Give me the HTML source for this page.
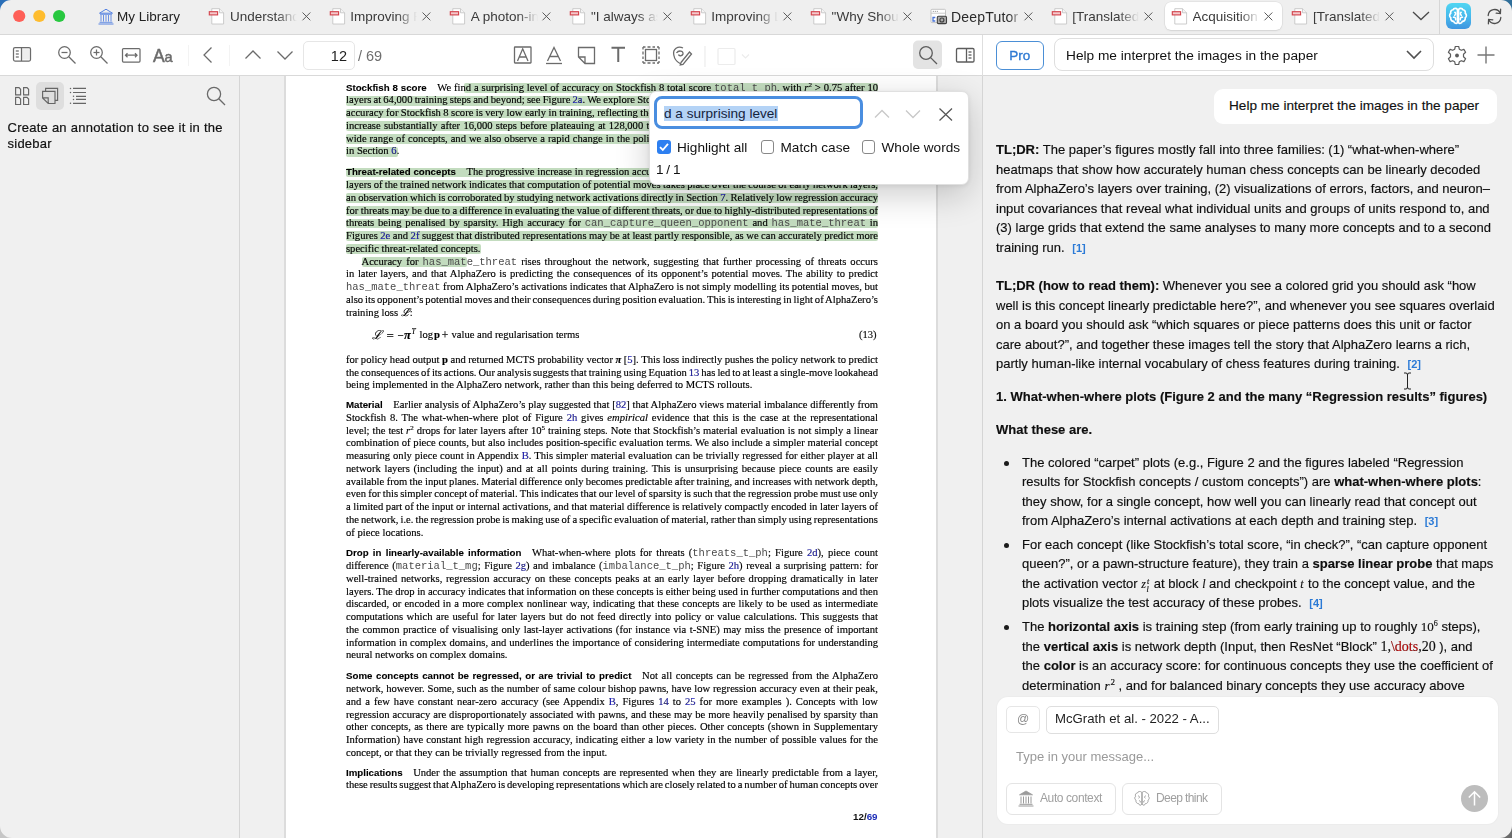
<!DOCTYPE html>
<html><head><meta charset="utf-8">
<style>
*{box-sizing:border-box;margin:0;padding:0}
html,body{width:1512px;height:838px;overflow:hidden;background:#efefef;font-family:"Liberation Sans",sans-serif;color:#1d1d1d}
.abs{position:absolute}
#tabbar{position:absolute;left:0;top:0;width:1512px;height:35px;background:#efefef;border-bottom:1px solid #d8d8d8}
#toolbar{position:absolute;left:0;top:35px;width:1512px;height:41px;background:#fff;border-bottom:1px solid #d9d9d9}
#sidebar{position:absolute;left:0;top:76px;width:240px;height:762px;background:#f0f0f0;border-right:1px solid #d5d5d5}
#pdfview{position:absolute;left:240px;top:76px;width:743px;height:762px;background:#f0f0f0;overflow:hidden}
#page{position:absolute;left:284px;top:76px;width:654px;height:762px;background:#fff;border-left:2px solid #dcdcdc;border-right:2px solid #dcdcdc}
#panel{position:absolute;left:982px;top:76px;width:530px;height:762px;background:#f0f0f0;border-left:1px solid #d5d5d5;overflow:hidden}
.tab{position:absolute;top:0;height:34px;font-size:13px;color:#3c3c3c}
.tabtxt{position:absolute;top:9px;white-space:nowrap;overflow:hidden;width:67px;-webkit-mask-image:linear-gradient(90deg,#000 75%,transparent 100%)}
.tabx{position:absolute;top:12px;width:9px;height:9px}
.ln{position:absolute;left:346px;height:12.75px;line-height:12.75px;font-family:"Liberation Serif",serif;font-size:10.6px;color:#000;white-space:nowrap;text-align:left;-webkit-text-stroke:0.15px #000}
.ln.last{}
.ln sup{font-size:7px;vertical-align:0;position:relative;top:-4px;line-height:0}
.mono{font-family:"Liberation Mono",monospace;font-size:10.5px;color:#4a4a4a;-webkit-text-stroke:0}
.lnk{color:#2323c8}
.hd{font-family:"Liberation Sans",sans-serif;font-weight:bold;font-size:9.7px;letter-spacing:0;color:#000;-webkit-text-stroke:0.1px #000}
.hl{position:absolute;height:9.9px;background:#c3dcbf;border-radius:2px;mix-blend-mode:multiply}
.chat{position:absolute;left:996px;font-size:13px;line-height:19.5px;height:19.5px;white-space:nowrap;color:#0e0e0e;-webkit-text-stroke:0.15px #0e0e0e}
.chat b{font-weight:bold}
.cite{color:#2b7ad6;font-weight:bold;font-size:11px;margin-left:4px;-webkit-text-stroke:0}
.bul{position:absolute;left:1004.3px;width:5px;height:5px;border-radius:50%;background:#1b1b1b}
svg{position:absolute;overflow:visible}
</style></head><body>

<!-- ================= TAB BAR ================= -->
<div id="tabbar"></div>
<svg style="left:0;top:0" width="14" height="14"><path d="M0 0 H11 A11 11 0 0 0 0 11 Z" fill="#2a6fb8"/></svg>
<svg style="left:1498px;top:0" width="14" height="14"><path d="M14 0 H3 A11 11 0 0 1 14 11 Z" fill="#2f6f9a"/></svg>
<svg style="left:0;top:0" width="80" height="34">
  <circle cx="19.2" cy="16" r="6.1" fill="#fe5f57"/>
  <circle cx="39.3" cy="16" r="6.1" fill="#febc2e"/>
  <circle cx="59.1" cy="16" r="6.1" fill="#28c840"/>
</svg>
<!-- My Library -->
<svg style="left:98px;top:8px" width="16" height="17" viewBox="0 0 16 17">
  <path d="M1.5 5.2 L8 1.2 L14.5 5.2 Z" fill="none" stroke="#4677e0" stroke-width="0.9" stroke-linejoin="round"/>
  <line x1="2" y1="6.3" x2="14" y2="6.3" stroke="#4677e0" stroke-width="0.8"/>
  <g stroke="#4677e0" stroke-width="0.8"><line x1="3" y1="7" x2="3" y2="13.5"/><line x1="5.5" y1="7" x2="5.5" y2="13.5"/><line x1="8" y1="7" x2="8" y2="13.5"/><line x1="10.5" y1="7" x2="10.5" y2="13.5"/><line x1="13" y1="7" x2="13" y2="13.5"/></g>
  <line x1="1.5" y1="14.3" x2="14.5" y2="14.3" stroke="#4677e0" stroke-width="0.8"/>
  <line x1="0.5" y1="16" x2="15.5" y2="16" stroke="#4677e0" stroke-width="0.9"/>
</svg>
<div class="abs" style="left:117px;top:9px;font-size:13.5px;color:#222;white-space:nowrap">My Library</div>

<svg style="left:209.3px;top:7.5px" width="18" height="17" viewBox="0 0 18 17"><path d="M2.8 0.7 H10.5 L14.6 4.8 V16 H2.8 Z" fill="#fff" stroke="#c6c6c6" stroke-width="0.9"/><path d="M10.5 0.7 V4.8 H14.6" fill="#f4f4f4" stroke="#c6c6c6" stroke-width="0.9"/><rect x="0.3" y="3.7" width="8.3" height="3.2" fill="#f4c9cb" stroke="#d3414a" stroke-width="1.1"/></svg>
<div class="abs" style="left:230.0px;top:9px;font-size:13.5px;color:#3a3a3a;white-space:nowrap;width:67px;overflow:hidden;-webkit-mask-image:linear-gradient(90deg,#000 70%,transparent 100%)">Understanding</div>
<svg style="left:301.5px;top:12px" width="9" height="9"><path d="M0.5 0.5 L8.3 8.3 M8.3 0.5 L0.5 8.3" stroke="#5a5a5a" stroke-width="1"/></svg>
<svg style="left:329.6px;top:7.5px" width="18" height="17" viewBox="0 0 18 17"><path d="M2.8 0.7 H10.5 L14.6 4.8 V16 H2.8 Z" fill="#fff" stroke="#c6c6c6" stroke-width="0.9"/><path d="M10.5 0.7 V4.8 H14.6" fill="#f4f4f4" stroke="#c6c6c6" stroke-width="0.9"/><rect x="0.3" y="3.7" width="8.3" height="3.2" fill="#f4c9cb" stroke="#d3414a" stroke-width="1.1"/></svg>
<div class="abs" style="left:350.3px;top:9px;font-size:13.5px;color:#3a3a3a;white-space:nowrap;width:67px;overflow:hidden;-webkit-mask-image:linear-gradient(90deg,#000 70%,transparent 100%)">Improving Reasoning</div>
<svg style="left:421.8px;top:12px" width="9" height="9"><path d="M0.5 0.5 L8.3 8.3 M8.3 0.5 L0.5 8.3" stroke="#5a5a5a" stroke-width="1"/></svg>
<svg style="left:450.0px;top:7.5px" width="18" height="17" viewBox="0 0 18 17"><path d="M2.8 0.7 H10.5 L14.6 4.8 V16 H2.8 Z" fill="#fff" stroke="#c6c6c6" stroke-width="0.9"/><path d="M10.5 0.7 V4.8 H14.6" fill="#f4f4f4" stroke="#c6c6c6" stroke-width="0.9"/><rect x="0.3" y="3.7" width="8.3" height="3.2" fill="#f4c9cb" stroke="#d3414a" stroke-width="1.1"/></svg>
<div class="abs" style="left:470.7px;top:9px;font-size:13.5px;color:#3a3a3a;white-space:nowrap;width:67px;overflow:hidden;-webkit-mask-image:linear-gradient(90deg,#000 70%,transparent 100%)">A photon-interaction</div>
<svg style="left:542.2px;top:12px" width="9" height="9"><path d="M0.5 0.5 L8.3 8.3 M8.3 0.5 L0.5 8.3" stroke="#5a5a5a" stroke-width="1"/></svg>
<svg style="left:570.3px;top:7.5px" width="18" height="17" viewBox="0 0 18 17"><path d="M2.8 0.7 H10.5 L14.6 4.8 V16 H2.8 Z" fill="#fff" stroke="#c6c6c6" stroke-width="0.9"/><path d="M10.5 0.7 V4.8 H14.6" fill="#f4f4f4" stroke="#c6c6c6" stroke-width="0.9"/><rect x="0.3" y="3.7" width="8.3" height="3.2" fill="#f4c9cb" stroke="#d3414a" stroke-width="1.1"/></svg>
<div class="abs" style="left:591.0px;top:9px;font-size:13.5px;color:#3a3a3a;white-space:nowrap;width:67px;overflow:hidden;-webkit-mask-image:linear-gradient(90deg,#000 70%,transparent 100%)">"I always assumed</div>
<svg style="left:662.5px;top:12px" width="9" height="9"><path d="M0.5 0.5 L8.3 8.3 M8.3 0.5 L0.5 8.3" stroke="#5a5a5a" stroke-width="1"/></svg>
<svg style="left:690.6px;top:7.5px" width="18" height="17" viewBox="0 0 18 17"><path d="M2.8 0.7 H10.5 L14.6 4.8 V16 H2.8 Z" fill="#fff" stroke="#c6c6c6" stroke-width="0.9"/><path d="M10.5 0.7 V4.8 H14.6" fill="#f4f4f4" stroke="#c6c6c6" stroke-width="0.9"/><rect x="0.3" y="3.7" width="8.3" height="3.2" fill="#f4c9cb" stroke="#d3414a" stroke-width="1.1"/></svg>
<div class="abs" style="left:711.3px;top:9px;font-size:13.5px;color:#3a3a3a;white-space:nowrap;width:67px;overflow:hidden;-webkit-mask-image:linear-gradient(90deg,#000 70%,transparent 100%)">Improving Language</div>
<svg style="left:782.8px;top:12px" width="9" height="9"><path d="M0.5 0.5 L8.3 8.3 M8.3 0.5 L0.5 8.3" stroke="#5a5a5a" stroke-width="1"/></svg>
<svg style="left:810.9px;top:7.5px" width="18" height="17" viewBox="0 0 18 17"><path d="M2.8 0.7 H10.5 L14.6 4.8 V16 H2.8 Z" fill="#fff" stroke="#c6c6c6" stroke-width="0.9"/><path d="M10.5 0.7 V4.8 H14.6" fill="#f4f4f4" stroke="#c6c6c6" stroke-width="0.9"/><rect x="0.3" y="3.7" width="8.3" height="3.2" fill="#f4c9cb" stroke="#d3414a" stroke-width="1.1"/></svg>
<div class="abs" style="left:831.6px;top:9px;font-size:13.5px;color:#3a3a3a;white-space:nowrap;width:67px;overflow:hidden;-webkit-mask-image:linear-gradient(90deg,#000 70%,transparent 100%)">"Why Should I</div>
<svg style="left:903.1px;top:12px" width="9" height="9"><path d="M0.5 0.5 L8.3 8.3 M8.3 0.5 L0.5 8.3" stroke="#5a5a5a" stroke-width="1"/></svg>
<svg style="left:929.3px;top:8px" width="19" height="17" viewBox="0 0 19 17"><rect x="2" y="1.3" width="14.5" height="13.3" rx="1" fill="#fff" stroke="#bdbdbd" stroke-width="0.9"/><line x1="2" y1="5.2" x2="16.5" y2="5.2" stroke="#c4c4c4" stroke-width="0.9"/><circle cx="4.3" cy="3.3" r="0.55" fill="#777"/><circle cx="6.3" cy="3.3" r="0.55" fill="#777"/><circle cx="8.3" cy="3.3" r="0.55" fill="#777"/><path d="M6.3 9.5 H4 V13 H6.3" fill="none" stroke="#4a74d8" stroke-width="1.3"/><rect x="8.3" y="8.3" width="9.2" height="7.3" rx="1.2" fill="#ababab" stroke="#3f3f3f" stroke-width="1.1"/><circle cx="12.9" cy="12" r="2" fill="none" stroke="#3f3f3f" stroke-width="1.1"/></svg>
<div class="abs" style="left:951.0px;top:8.5px;font-size:14px;letter-spacing:0.2px;color:#2a2a2a;white-space:nowrap;width:72px;overflow:hidden;-webkit-mask-image:linear-gradient(90deg,#000 80%,transparent 100%)">DeepTutor</div>
<svg style="left:1023.5px;top:12px" width="9" height="9"><path d="M0.5 0.5 L8.3 8.3 M8.3 0.5 L0.5 8.3" stroke="#5a5a5a" stroke-width="1"/></svg>
<svg style="left:1051.6px;top:7.5px" width="18" height="17" viewBox="0 0 18 17"><path d="M2.8 0.7 H10.5 L14.6 4.8 V16 H2.8 Z" fill="#fff" stroke="#c6c6c6" stroke-width="0.9"/><path d="M10.5 0.7 V4.8 H14.6" fill="#f4f4f4" stroke="#c6c6c6" stroke-width="0.9"/><rect x="0.3" y="3.7" width="8.3" height="3.2" fill="#f4c9cb" stroke="#d3414a" stroke-width="1.1"/></svg>
<div class="abs" style="left:1072.3px;top:9px;font-size:13.5px;color:#3a3a3a;white-space:nowrap;width:67px;overflow:hidden;-webkit-mask-image:linear-gradient(90deg,#000 70%,transparent 100%)">[Translated]</div>
<svg style="left:1143.8px;top:12px" width="9" height="9"><path d="M0.5 0.5 L8.3 8.3 M8.3 0.5 L0.5 8.3" stroke="#5a5a5a" stroke-width="1"/></svg>
<div class="abs" style="left:1165px;top:2px;width:117px;height:28px;background:#fff;border-radius:6px;box-shadow:0 0 0 0.5px rgba(0,0,0,0.08),0 1px 2px rgba(0,0,0,0.08)"></div>
<svg style="left:1171.9px;top:7.5px" width="18" height="17" viewBox="0 0 18 17"><path d="M2.8 0.7 H10.5 L14.6 4.8 V16 H2.8 Z" fill="#fff" stroke="#c6c6c6" stroke-width="0.9"/><path d="M10.5 0.7 V4.8 H14.6" fill="#f4f4f4" stroke="#c6c6c6" stroke-width="0.9"/><rect x="0.3" y="3.7" width="8.3" height="3.2" fill="#f4c9cb" stroke="#d3414a" stroke-width="1.1"/></svg>
<div class="abs" style="left:1192.6px;top:9px;font-size:13.5px;color:#3a3a3a;white-space:nowrap;width:67px;overflow:hidden;-webkit-mask-image:linear-gradient(90deg,#000 70%,transparent 100%)">Acquisition of</div>
<svg style="left:1264.1px;top:12px" width="9" height="9"><path d="M0.5 0.5 L8.3 8.3 M8.3 0.5 L0.5 8.3" stroke="#5a5a5a" stroke-width="1"/></svg>
<svg style="left:1292.3px;top:7.5px" width="18" height="17" viewBox="0 0 18 17"><path d="M2.8 0.7 H10.5 L14.6 4.8 V16 H2.8 Z" fill="#fff" stroke="#c6c6c6" stroke-width="0.9"/><path d="M10.5 0.7 V4.8 H14.6" fill="#f4f4f4" stroke="#c6c6c6" stroke-width="0.9"/><rect x="0.3" y="3.7" width="8.3" height="3.2" fill="#f4c9cb" stroke="#d3414a" stroke-width="1.1"/></svg>
<div class="abs" style="left:1313.0px;top:9px;font-size:13.5px;color:#3a3a3a;white-space:nowrap;width:67px;overflow:hidden;-webkit-mask-image:linear-gradient(90deg,#000 70%,transparent 100%)">[Translated]</div>
<svg style="left:1384.5px;top:12px" width="9" height="9"><path d="M0.5 0.5 L8.3 8.3 M8.3 0.5 L0.5 8.3" stroke="#5a5a5a" stroke-width="1"/></svg>

<!-- chevron + separator + brain + sync -->
<svg style="left:1412px;top:11px" width="18" height="10" viewBox="0 0 18 10"><path d="M1 1 L9 8.5 L17 1" fill="none" stroke="#4a4a4a" stroke-width="1.3"/></svg>
<div class="abs" style="left:1439px;top:0;width:1px;height:34px;background:#d6d6d6"></div>
<div class="abs" style="left:1446px;top:3px;width:25px;height:25.5px;border-radius:6px;background:linear-gradient(180deg,#4fd6f2 0%,#47b7ec 55%,#3e95e0 100%)"></div>
<svg style="left:1448px;top:6.5px" width="20" height="18" viewBox="0 0 24 22">
  <g fill="none" stroke="#fff" stroke-width="2" stroke-linecap="round" stroke-linejoin="round">
  <path d="M11.3 3 C10 1.2 6.8 1.3 6 3.4 C3.6 3.5 2.5 5.8 3.2 7.6 C1.2 8.8 1.3 12 3.2 13 C2.6 15.6 4.5 17.8 6.8 17.6 C7.4 20.2 10.4 20.8 11.3 19 Z"/>
  <path d="M12.7 3 C14 1.2 17.2 1.3 18 3.4 C20.4 3.5 21.5 5.8 20.8 7.6 C22.8 8.8 22.7 12 20.8 13 C21.4 15.6 19.5 17.8 17.2 17.6 C16.6 20.2 13.6 20.8 12.7 19 Z"/>
  <path d="M8.2 6.5 C9.6 7.2 9.4 9.4 8 10 M6.5 12.5 C8.2 12.2 9.6 13.6 9.2 15.5 M15.8 6.5 C14.4 7.2 14.6 9.4 16 10 M17.5 12.5 C15.8 12.2 14.4 13.6 14.8 15.5"/>
  </g>
</svg>
<svg style="left:1486px;top:7.5px" width="17" height="17" viewBox="0 0 17 17">
  <g fill="none" stroke="#4f4f4f" stroke-width="1.3" stroke-linecap="round">
  <path d="M2.2 7.5 A6.3 6.3 0 0 1 14.2 5.2"/>
  <path d="M14.8 9.5 A6.3 6.3 0 0 1 2.8 11.8"/>
  <path d="M14.6 1.2 L14.4 5.6 L10.2 5.2"/>
  <path d="M2.4 15.8 L2.6 11.4 L6.8 11.8"/>
  </g>
</svg>

<!-- ================= TOOLBAR ================= -->
<div id="toolbar"></div>
<svg style="left:0;top:35px" width="983" height="41">
 <g fill="none" stroke="#6b6b6b" stroke-width="1.25">
  <!-- sidebar toggle -->
  <rect x="22" y="13.5" width="7.5" height="11" fill="#eeeeee" stroke="none"/>
  <rect x="13.5" y="12.5" width="17" height="13.5" rx="1.5"/>
  <line x1="21.5" y1="12.5" x2="21.5" y2="26"/>
  <line x1="15.8" y1="16" x2="18.8" y2="16"/><line x1="15.8" y1="19" x2="18.8" y2="19"/><line x1="15.8" y1="22" x2="18.8" y2="22"/>
  <!-- zoom out -->
  <circle cx="64.5" cy="17.5" r="5.8"/><line x1="68.8" y1="21.8" x2="75.5" y2="28.5"/><line x1="61.5" y1="17.5" x2="67.5" y2="17.5"/>
  <!-- zoom in -->
  <circle cx="96.5" cy="17.5" r="5.8"/><line x1="100.8" y1="21.8" x2="107.5" y2="28.5"/><line x1="93.5" y1="17.5" x2="99.5" y2="17.5"/><line x1="96.5" y1="14.5" x2="96.5" y2="20.5"/>
  <!-- fit width -->
  <rect x="122.5" y="13.5" width="17.5" height="13.5" rx="1"/>
  <path d="M125.5 20.2 H137 M127.5 18.2 L125.5 20.2 L127.5 22.2 M135 18.2 L137 20.2 L135 22.2"/>
  <!-- back -->
  <path d="M211.5 12.5 L204 20 L211.5 27.5"/>
  <!-- up / down -->
  <path d="M245.5 23.5 L253 16 L260.5 23.5"/>
  <path d="M277.5 16.5 L285 24 L292.5 16.5"/>
 </g>
 <text x="153" y="26.5" font-family="Liberation Sans" font-size="17.5" fill="#6b6b6b" stroke="#6b6b6b" stroke-width="0.5">A</text>
 <text x="164.5" y="26.5" font-family="Liberation Sans" font-size="14.5" fill="#6b6b6b" stroke="#6b6b6b" stroke-width="0.5">a</text>
 <g stroke="#f3f3f3" stroke-width="1"><line x1="188.5" y1="10" x2="188.5" y2="31"/><line x1="229.5" y1="10" x2="229.5" y2="31"/></g>
 <!-- page input -->
 <rect x="303.5" y="6.5" width="51" height="28" rx="4.5" fill="#fff" stroke="#e6e6e6"/>
 <text x="347" y="26" text-anchor="end" font-family="Liberation Sans" font-size="14.5" fill="#1e1e1e">12</text>
 <text x="358" y="26" font-family="Liberation Sans" font-size="14.5" fill="#6e6e6e">/ 69</text>
 <!-- annotation tools -->
 <g fill="none" stroke="#6b6b6b" stroke-width="1.3" transform="translate(0,-1)">
  <rect x="514.5" y="13" width="16.5" height="16" rx="0.5"/>
  <path d="M517.5 27 L522.7 14.8 L528 27 M519.3 23 H526.2"/>
  <path d="M547.5 27 L554 13.5 L560.5 27 M549.7 22.5 H558.3"/>
  <line x1="546" y1="29.5" x2="562" y2="29.5"/>
  <path d="M578.5 13.5 H594.5 V29.5 H585 L578.5 23 Z M578.5 23 H585 V29.5"/>
  <path d="M611.5 13.8 H625 M618.25 13.8 V28" stroke-width="2"/>
  <path d="M643 13 h2.5 M647.5 13 h3 M652.5 13 h2.5 M657 13 h2 M643 29 h2.5 M647.5 29 h3 M652.5 29 h2.5 M657 29 h2 M643 13 v2.5 M643 17.5 v3 M643 22.5 v2.5 M643 27 v2 M659 13 v2.5 M659 17.5 v3 M659 22.5 v2.5 M659 27 v2" stroke-width="1.3"/>
  <rect x="645.5" y="15.5" width="11" height="11"/>
  <path d="M683 14 C678 11.5 672.5 15 673.8 21 C674.5 25 677 28 680 29.5 M676.5 19 C678.5 16 683.5 16.5 683 20 C682.5 22 679 22.5 678.5 20.5"/>
  <path d="M681 28.5 L689.5 18 L691.5 20 L683 30.3 L680.3 30.8 Z"/>
 </g>
 <g fill="none" stroke="#ececec" stroke-width="1.2">
  <line x1="705" y1="11" x2="705" y2="32"/>
  <rect x="718" y="13.5" width="17" height="16" rx="1"/>
  <path d="M742 19.5 L745.5 23 L749 19.5"/>
 </g>
 <!-- search (active) -->
 <rect x="913" y="5.5" width="29" height="28.5" rx="5" fill="#e3e3e3"/>
 <g fill="none" stroke="#5c5c5c" stroke-width="1.3">
  <circle cx="926" cy="18" r="6.3"/><line x1="930.6" y1="22.6" x2="937" y2="29"/>
  <!-- right sidebar toggle -->
  <rect x="956.5" y="13.5" width="17.5" height="13.5" rx="1.2"/>
  <line x1="966.5" y1="13.5" x2="966.5" y2="27"/>
  <line x1="968.5" y1="17" x2="971.5" y2="17"/><line x1="968.5" y1="20" x2="971.5" y2="20"/><line x1="968.5" y1="23" x2="971.5" y2="23"/>
 </g>
</svg>
<div class="abs" style="left:982px;top:35px;width:1px;height:41px;background:#dedede"></div>
<!-- Pro -->
<div class="abs" style="left:996px;top:40.5px;width:47.5px;height:29px;border:1.3px solid #4b8fd6;border-radius:6px;color:#2f7ad3;font-size:13.5px;font-weight:normal;-webkit-text-stroke:0.35px #2f7ad3;text-align:center;line-height:27px">Pro</div>
<div class="abs" style="left:1054px;top:38.2px;width:380px;height:32.5px;border:1.3px solid #dedede;border-radius:8px;background:#fff"></div>
<div class="abs" style="left:1066px;top:47.5px;font-size:13.7px;color:#111;white-space:nowrap">Help me interpret the images in the paper</div>
<svg style="left:1406px;top:50px" width="16" height="9" viewBox="0 0 16 9"><path d="M1 1 L8 8 L15 1" fill="none" stroke="#505050" stroke-width="1.6"/></svg>
<svg style="left:1447px;top:44.5px" width="20" height="21" viewBox="0 0 20 21">
 <path fill="none" stroke="#5c5c5c" stroke-width="1.2" stroke-linejoin="round" d="M8.3 1.5 H11.7 L12.3 4.2 L14.3 5.3 L16.9 4.4 L18.6 7.3 L16.5 9.2 V11.8 L18.6 13.7 L16.9 16.6 L14.3 15.7 L12.3 16.8 L11.7 19.5 H8.3 L7.7 16.8 L5.7 15.7 L3.1 16.6 L1.4 13.7 L3.5 11.8 V9.2 L1.4 7.3 L3.1 4.4 L5.7 5.3 L7.7 4.2 Z"/>
 <circle cx="10" cy="10.5" r="1.9" fill="#5c5c5c"/>
</svg>
<svg style="left:1477px;top:46px" width="18" height="18"><path d="M9 0.5 V17.5 M0.5 9 H17.5" stroke="#777" stroke-width="1.4"/></svg>

<!-- ================= SIDEBAR ================= -->
<div id="sidebar"></div>
<div class="abs" style="left:36px;top:82px;width:28px;height:28px;border-radius:5px;background:#dedede"></div>
<svg style="left:0;top:76px" width="240" height="40">
 <g fill="none" stroke="#666" stroke-width="1.15">
  <path d="M15.6 11.6 h3.4 l1.6 1.7 v5.5 h-5 Z M23.6 11.6 h3.4 l1.6 1.7 v5.5 h-5 Z M15.6 21.4 h3.4 l1.6 1.7 v5.4 h-5 Z M23.6 21.4 h3.4 l1.6 1.7 v5.4 h-5 Z"/>
  <path d="M45.6 15 V12.3 H57.6 V24.4 H55"/>
  <path d="M42.6 15.4 H55 V27.5 H48.2 L42.6 21.9 Z M42.6 21.9 H48.2 V27.5"/>
  <path d="M73 12.4 H86 M73 16.5 H86 M76 20.3 H86 M76 23.4 H86 M73 27.3 H86" stroke-width="1.2"/>
 </g>
 <g fill="#666"><circle cx="70.5" cy="12.4" r="0.75"/><circle cx="70.5" cy="16.5" r="0.75"/><circle cx="73.5" cy="20.3" r="0.75"/><circle cx="73.5" cy="23.4" r="0.75"/><circle cx="70.5" cy="27.3" r="0.75"/></g>
 <g fill="none" stroke="#6a6a6a" stroke-width="1.3"><circle cx="214" cy="18" r="6.6"/><line x1="218.8" y1="22.8" x2="225" y2="29"/></g>
</svg>
<div class="abs" style="left:7.5px;top:119.5px;width:231px;font-size:13px;line-height:16px;color:#111;letter-spacing:0.25px;-webkit-text-stroke:0.2px #111">Create an annotation to see it in the sidebar</div>

<!-- ================= PDF VIEW ================= -->
<div id="pdfview"></div>
<div id="page"></div>
<div class="hl" style="left:464px;width:414px;top:83.00px"></div><div class="hl" style="left:346px;width:532px;top:95.75px"></div><div class="hl" style="left:346px;width:532px;top:108.50px"></div><div class="hl" style="left:346px;width:532px;top:121.25px"></div><div class="hl" style="left:346px;width:532px;top:134.00px"></div><div class="hl" style="left:346px;width:52px;top:146.75px"></div><div class="hl" style="left:346px;width:532px;top:167.60px"></div><div class="hl" style="left:346px;width:532px;top:180.35px"></div><div class="hl" style="left:346px;width:532px;top:193.10px"></div><div class="hl" style="left:346px;width:532px;top:205.85px"></div><div class="hl" style="left:346px;width:532px;top:218.60px"></div><div class="hl" style="left:346px;width:532px;top:231.35px"></div><div class="hl" style="left:346px;width:135px;top:244.10px"></div><div class="hl" style="left:362px;width:105px;top:256.85px"></div>
<div class="ln" style="top:81.65px;word-spacing:0.236px"><span class="hd">Stockfish 8 score</span>&emsp;We find a surprising level of accuracy on Stockfish 8 total score <span class="mono">total_t_ph</span>, with <i>r</i><sup>2</sup> &gt; 0.75 after 10</div>
<div class="ln" style="top:94.40px;word-spacing:-0.457px">layers at 64,000 training steps and beyond; see Figure <span class="lnk">2a</span>. We explore Stockfish 8 score in more detail as we find that regression</div>
<div class="ln" style="top:107.15px;word-spacing:-0.217px">accuracy for Stockfish 8 score is very low early in training, reflecting the change in policy; accuracy begins to rise sharply and</div>
<div class="ln" style="top:119.90px;word-spacing:0.600px">increase substantially after 16,000 steps before plateauing at 128,000 training steps. This mirrors the change in a very large</div>
<div class="ln" style="top:132.65px;word-spacing:0.350px">wide range of concepts, and we also observe a rapid change in the policy at a similar point in training, as discussed in detail</div>
<div class="ln last" style="top:145.40px">in Section <span class="lnk">6</span>.</div>
<div class="ln" style="top:166.25px;word-spacing:0.090px"><span class="hd">Threat-related concepts</span>&emsp;The progressive increase in regression accuracy for threat-related concepts in the later layers and</div>
<div class="ln" style="top:179.00px;word-spacing:-0.303px">layers of the trained network indicates that computation of potential moves takes place over the course of early network layers,</div>
<div class="ln" style="top:191.75px;word-spacing:-0.344px">an observation which is corroborated by studying network activations directly in Section <span class="lnk">7</span>. Relatively low regression accuracy</div>
<div class="ln" style="top:204.50px;word-spacing:-0.312px">for threats may be due to a difference in evaluating the value of different threats, or due to highly-distributed representations of</div>
<div class="ln" style="top:217.25px;word-spacing:1.138px">threats being penalised by sparsity. High accuracy for <span class="mono">can_capture_queen_opponent</span> and <span class="mono">has_mate_threat</span> in</div>
<div class="ln" style="top:230.00px;word-spacing:-0.149px">Figures <span class="lnk">2e</span> and <span class="lnk">2f</span> suggest that distributed representations may be at least partly responsible, as we can accurately predict more</div>
<div class="ln last" style="top:242.75px">specific threat-related concepts.</div>
<div class="ln" style="top:255.50px;word-spacing:1.411px"><span style="display:inline-block;width:15.5px"></span>Accuracy for <span class="mono">has_mate_threat</span> rises throughout the network, suggesting that further processing of threats occurs</div>
<div class="ln" style="top:268.25px;word-spacing:0.997px">in later layers, and that AlphaZero is predicting the consequences of its opponent&#8217;s potential moves. The ability to predict</div>
<div class="ln" style="top:281.00px;word-spacing:-0.045px"><span class="mono">has_mate_threat</span> from AlphaZero&#8217;s activations indicates that AlphaZero is not simply modelling its potential moves, but</div>
<div class="ln" style="top:293.75px;word-spacing:-0.713px">also its opponent&#8217;s potential moves and their consequences during position evaluation. This is interesting in light of AlphaZero&#8217;s</div>
<div class="ln last" style="top:306.50px">training loss <i>&#8466;</i>:</div>
<div class="ln" style="top:353.95px;word-spacing:-0.127px">for policy head output <b>p</b> and returned MCTS probability vector <b><i>&#960;</i></b> [<span class="lnk">5</span>]. This loss indirectly pushes the policy network to predict</div>
<div class="ln" style="top:366.70px;word-spacing:-0.688px">the consequences of its actions. Our analysis suggests that training using Equation <span class="lnk">13</span> has led to at least a single-move lookahead</div>
<div class="ln last" style="top:379.45px">being implemented in the AlphaZero network, rather than this being deferred to MCTS rollouts.</div>
<div class="ln" style="top:399.05px;word-spacing:0.054px"><span class="hd">Material</span>&emsp;Earlier analysis of AlphaZero&#8217;s play suggested that [<span class="lnk">82</span>] that AlphaZero views material imbalance differently from</div>
<div class="ln" style="top:411.80px;word-spacing:1.207px">Stockfish 8. The what-when-where plot of Figure <span class="lnk">2h</span> gives <i>empirical</i> evidence that this is the case at the representational</div>
<div class="ln" style="top:424.55px;word-spacing:0.314px">level; the test <i>r</i><sup>2</sup> drops for later layers after 10<sup>5</sup> training steps. Note that Stockfish&#8217;s material evaluation is not simply a linear</div>
<div class="ln" style="top:437.30px;word-spacing:0.146px">combination of piece counts, but also includes position-specific evaluation terms. We also include a simpler material concept</div>
<div class="ln" style="top:450.05px;word-spacing:0.263px">measuring only piece count in Appendix <span class="lnk">B</span>. This simpler material evaluation can be trivially regressed for either player at all</div>
<div class="ln" style="top:462.80px;word-spacing:1.110px">network layers (including the input) and at all points during training. This is unsurprising because piece counts are easily</div>
<div class="ln" style="top:475.55px;word-spacing:-0.254px">available from the input planes. Material difference only becomes predictable after training, and increases with network depth,</div>
<div class="ln" style="top:488.30px;word-spacing:-0.455px">even for this simpler concept of material. This indicates that our level of sparsity is such that the regression probe must use only</div>
<div class="ln" style="top:501.05px;word-spacing:-0.085px">a limited part of the input or internal activations, and that material difference is relatively compactly encoded in later layers of</div>
<div class="ln" style="top:513.80px;word-spacing:-0.567px">the network, i.e. the regression probe is making use of a specific evaluation of material, rather than simply using representations</div>
<div class="ln last" style="top:526.55px">of piece locations.</div>
<div class="ln" style="top:547.35px;word-spacing:1.557px"><span class="hd">Drop in linearly-available information</span>&emsp;What-when-where plots for threats (<span class="mono">threats_t_ph</span>; Figure <span class="lnk">2d</span>), piece count</div>
<div class="ln" style="top:560.10px;word-spacing:0.898px">difference (<span class="mono">material_t_mg</span>; Figure <span class="lnk">2g</span>) and imbalance (<span class="mono">imbalance_t_ph</span>; Figure <span class="lnk">2h</span>) reveal a surprising pattern: for</div>
<div class="ln" style="top:572.85px;word-spacing:1.059px">well-trained networks, regression accuracy on these concepts peaks at an early layer before dropping dramatically in later</div>
<div class="ln" style="top:585.60px;word-spacing:-0.138px">layers. The drop in accuracy indicates that information on these concepts is either being used in further computations and then</div>
<div class="ln" style="top:598.35px;word-spacing:0.524px">discarded, or encoded in a more complex nonlinear way, indicating that these concepts are likely to be used as intermediate</div>
<div class="ln" style="top:611.10px;word-spacing:0.882px">computations which are useful for later layers but do not feed directly into policy or value calculations. This suggests that</div>
<div class="ln" style="top:623.85px;word-spacing:0.785px">the common practice of visualising only last-layer activations (for instance via t-SNE) may miss the presence of important</div>
<div class="ln" style="top:636.60px;word-spacing:0.279px">information in complex domains, and underlines the importance of considering intermediate computations for understanding</div>
<div class="ln last" style="top:649.35px">neural networks on complex domains.</div>
<div class="ln" style="top:670.25px;word-spacing:0.965px"><span class="hd">Some concepts cannot be regressed, or are trivial to predict</span>&emsp;Not all concepts can be regressed from the AlphaZero</div>
<div class="ln" style="top:683.00px;word-spacing:0.161px">network, however. Some, such as the number of same colour bishop pawns, have low regression accuracy even at their peak,</div>
<div class="ln" style="top:695.75px;word-spacing:1.339px">and a few have constant near-zero accuracy (see Appendix <span class="lnk">B</span>, Figures <span class="lnk">14</span> to <span class="lnk">25</span> for more examples ). Concepts with low</div>
<div class="ln" style="top:708.50px;word-spacing:0.357px">regression accuracy are disproportionately associated with pawns, and these may be more heavily penalised by sparsity than</div>
<div class="ln" style="top:721.25px;word-spacing:0.694px">other concepts, as there are typically more pawns on the board than other pieces. Other concepts (shown in Supplementary</div>
<div class="ln" style="top:734.00px;word-spacing:0.388px">Information) have constant high regression accuracy, indicating either a low variety in the number of possible values for the</div>
<div class="ln last" style="top:746.75px">concept, or that they can be trivially regressed from the input.</div>
<div class="ln" style="top:766.65px;word-spacing:0.780px"><span class="hd">Implications</span>&emsp;Under the assumption that human concepts are represented when they are linearly predictable from a layer,</div>
<div class="ln" style="top:779.40px;word-spacing:-0.713px">these results suggest that AlphaZero is developing representations which are closely related to a number of human concepts over</div>
<!-- equation -->
<div style="position:absolute;top:329.4px;-webkit-text-stroke:0.15px #000;font-family:'Liberation Serif',serif;font-size:10.6px;line-height:12.75px;white-space:nowrap;color:#000;left:371.5px"><i style="font-size:12px">&#8466;</i></div>
<div style="position:absolute;top:329.4px;-webkit-text-stroke:0.15px #000;font-family:'Liberation Serif',serif;font-size:10.6px;line-height:12.75px;white-space:nowrap;color:#000;left:386.6px"><span style="font-size:13px;position:relative;top:0.3px">=</span></div>
<div style="position:absolute;top:329.4px;-webkit-text-stroke:0.15px #000;font-family:'Liberation Serif',serif;font-size:10.6px;line-height:12.75px;white-space:nowrap;color:#000;left:397.2px"><span style="font-size:11px">&#8722;</span></div>
<div style="position:absolute;top:329.4px;-webkit-text-stroke:0.15px #000;font-family:'Liberation Serif',serif;font-size:10.6px;line-height:12.75px;white-space:nowrap;color:#000;left:404px"><b><i style="font-size:12.5px">&#960;</i></b></div>
<div style="position:absolute;top:329.4px;-webkit-text-stroke:0.15px #000;font-family:'Liberation Serif',serif;font-size:10.6px;line-height:12.75px;white-space:nowrap;color:#000;left:411.6px"><i style="font-size:7.5px;position:relative;top:-4px">T</i></div>
<div style="position:absolute;top:329.4px;-webkit-text-stroke:0.15px #000;font-family:'Liberation Serif',serif;font-size:10.6px;line-height:12.75px;white-space:nowrap;color:#000;left:419.6px">log</div>
<div style="position:absolute;top:329.4px;-webkit-text-stroke:0.15px #000;font-family:'Liberation Serif',serif;font-size:10.6px;line-height:12.75px;white-space:nowrap;color:#000;left:434.0px"><b>p</b></div>
<div style="position:absolute;top:329.4px;-webkit-text-stroke:0.15px #000;font-family:'Liberation Serif',serif;font-size:10.6px;line-height:12.75px;white-space:nowrap;color:#000;left:441.8px"><span style="font-size:11.5px">+</span></div>
<div style="position:absolute;top:329.4px;-webkit-text-stroke:0.15px #000;font-family:'Liberation Serif',serif;font-size:10.6px;line-height:12.75px;white-space:nowrap;color:#000;left:451.5px">value and regularisation terms</div>
<div class="abs" style="left:859px;top:329.4px;-webkit-text-stroke:0.15px #000;font-family:'Liberation Serif',serif;font-size:10.6px;line-height:12.75px;white-space:nowrap;color:#111">(13)</div>
<div class="abs" style="left:853px;top:811px;font-size:9.8px;font-weight:bold;white-space:nowrap;color:#111">12/<span style="color:#1c2cb8">69</span></div>

<!-- find popup -->
<div class="abs" style="left:649px;top:90.5px;width:319.5px;height:94.5px;background:#fff;border-radius:7px;border:1px solid #e0e0e0;box-shadow:0 10px 34px rgba(0,0,0,0.2),0 1px 4px rgba(0,0,0,0.08)"></div>
<div class="abs" style="left:654px;top:96px;width:208.5px;height:33px;border:3px solid #4a8ee0;border-radius:8px;background:#fff"></div>
<div class="abs" style="left:664px;top:106px;height:14.5px;width:113.6px;background:#b4d3f6"></div>
<div class="abs" style="left:664px;top:105.5px;font-size:13.6px;color:#14233d;white-space:nowrap">d a surprising level</div>
<svg style="left:874px;top:108px" width="80" height="14">
 <path d="M1 9.5 L8 2.5 L15 9.5" fill="none" stroke="#c8c8c8" stroke-width="1.3"/>
 <path d="M32 2.5 L39 9.5 L46 2.5" fill="none" stroke="#c8c8c8" stroke-width="1.3"/>
 <path d="M65.5 0.5 L78 12.5 M78 0.5 L65.5 12.5" fill="none" stroke="#555" stroke-width="1.25"/>
</svg>
<div class="abs" style="left:657px;top:140px;width:13.5px;height:13.5px;border-radius:3px;background:#2d7ff0"></div>
<svg style="left:657px;top:140px" width="14" height="14"><path d="M3 7.2 L5.8 10 L11 3.8" fill="none" stroke="#fff" stroke-width="1.8"/></svg>
<div class="abs" style="left:760.5px;top:140px;width:13.5px;height:13.5px;border-radius:3px;border:1.6px solid #888;background:#fff"></div>
<div class="abs" style="left:861.5px;top:140px;width:13.5px;height:13.5px;border-radius:3px;border:1.6px solid #888;background:#fff"></div>
<div class="abs" style="left:677px;top:139.5px;font-size:13.6px;color:#111;white-space:nowrap">Highlight all</div>
<div class="abs" style="left:780.5px;top:139.5px;font-size:13.6px;color:#111;white-space:nowrap">Match case</div>
<div class="abs" style="left:881.5px;top:139.5px;font-size:13.6px;color:#111;white-space:nowrap">Whole words</div>
<div class="abs" style="left:656px;top:161.5px;font-size:13.6px;color:#111;white-space:nowrap;letter-spacing:-0.5px">1 / 1</div>

<!-- ================= RIGHT PANEL ================= -->
<div id="panel"></div>
<div class="abs" style="left:1213.5px;top:89px;width:283px;height:35px;background:#fff;border-radius:9px"></div>
<div class="abs" style="left:1229px;top:98px;font-size:13.6px;color:#111;white-space:nowrap;-webkit-text-stroke:0.15px #111">Help me interpret the images in the paper</div>
<div class="chat" style="left:996.0px;top:140.10px"><b>TL;DR:</b> The paper&#8217;s figures mostly fall into three families: (1) &#8220;what-when-where&#8221;</div>
<div class="chat" style="left:996.0px;top:159.60px">heatmaps that show how accurately human chess concepts can be linearly decoded</div>
<div class="chat" style="left:996.0px;top:179.10px">from AlphaZero&#8217;s layers over training, (2) visualizations of errors, factors, and neuron&#8211;</div>
<div class="chat" style="left:996.0px;top:198.60px">input covariances that reveal what individual units and groups of units respond to, and</div>
<div class="chat" style="left:996.0px;top:218.10px">(3) large grids that extend the same analyses to many more concepts and to a second</div>
<div class="chat" style="left:996.0px;top:237.60px">training run. <span class="cite">[1]</span></div>
<div class="chat" style="left:996.0px;top:276.10px"><b>TL;DR (how to read them):</b> Whenever you see a colored grid you should ask &#8220;how</div>
<div class="chat" style="left:996.0px;top:295.65px">well is this concept linearly predictable here?&#8221;, and whenever you see squares overlaid</div>
<div class="chat" style="left:996.0px;top:315.20px">on a board you should ask &#8220;which squares or piece patterns does this unit or factor</div>
<div class="chat" style="left:996.0px;top:334.75px">care about?&#8221;, and together these images tell the story that AlphaZero learns a rich,</div>
<div class="chat" style="left:996.0px;top:354.30px">partly human-like internal vocabulary of chess features during training. <span class="cite">[2]</span></div>
<div class="chat" style="left:996.0px;top:387.10px"><b>1. What-when-where plots (Figure 2 and the many &#8220;Regression results&#8221; figures)</b></div>
<div class="chat" style="left:996.0px;top:420.30px"><b>What these are.</b></div>
<div class="bul" style="top:461.0px"></div>
<div class="chat" style="left:1022.0px;top:452.70px">The colored &#8220;carpet&#8221; plots (e.g., Figure 2 and the figures labeled &#8220;Regression</div>
<div class="chat" style="left:1022.0px;top:472.20px">results for Stockfish concepts / custom concepts&#8221;) are <b>what-when-where plots</b>:</div>
<div class="chat" style="left:1022.0px;top:491.70px">they show, for a single concept, how well you can linearly read that concept out</div>
<div class="chat" style="left:1022.0px;top:511.20px">from AlphaZero&#8217;s internal activations at each depth and training step. <span class="cite">[3]</span></div>
<div class="bul" style="top:543.0px"></div>
<div class="chat" style="left:1022.0px;top:534.70px">For each concept (like Stockfish&#8217;s total score, &#8220;in check?&#8221;, &#8220;can capture opponent</div>
<div class="chat" style="left:1022.0px;top:554.20px">queen?&#8221;, or a pawn-structure feature), they train a <b>sparse linear probe</b> that maps</div>
<div class="chat" style="left:1022.0px;top:573.70px">the activation vector <span style="font-family:'Liberation Serif',serif;font-style:italic;font-size:12px">z</span><span style="display:inline-block;position:relative;width:4.2px;height:10px"><span style="font-family:'Liberation Serif',serif;font-style:italic;font-size:8px;position:absolute;left:1px;top:-6px">t</span><span style="font-family:'Liberation Serif',serif;font-style:italic;font-size:8px;position:absolute;left:0.5px;top:2px">l</span></span> at block <span style="font-family:'Liberation Serif',serif;font-style:italic;font-size:12px;margin-right:0px">l</span> and checkpoint <span style="font-family:'Liberation Serif',serif;font-style:italic;font-size:12px;margin-right:1px">t</span> to the concept value, and the</div>
<div class="chat" style="left:1022.0px;top:593.20px">plots visualize the test accuracy of these probes. <span class="cite">[4]</span></div>
<div class="bul" style="top:625.4px"></div>
<div class="chat" style="left:1022.0px;top:617.10px">The <b>horizontal axis</b> is training step (from early training up to roughly <span style="font-family:'Liberation Serif',serif">10<span style="font-size:8px;position:relative;top:-5px">6</span></span> steps),</div>
<div class="chat" style="left:1022.0px;top:636.60px">the <b>vertical axis</b> is network depth (Input, then ResNet &#8220;Block&#8221; <span style="font-family:'Liberation Serif',serif;font-size:14px">1,<span style="color:#cc0000">\dots</span>,20</span> ), and</div>
<div class="chat" style="left:1022.0px;top:656.10px">the <b>color</b> is an accuracy score: for continuous concepts they use the coefficient of</div>
<div class="chat" style="left:1022.0px;top:675.60px">determination <span style="font-family:'Liberation Serif',serif;font-style:italic;font-size:13px">r</span><span style="font-family:'Liberation Serif',serif;font-size:9px;position:relative;top:-5px;margin-left:1px">2</span> , and for balanced binary concepts they use accuracy above</div>
<!-- I-beam cursor -->
<svg style="left:1403px;top:372px" width="9" height="18"><path d="M1 1 H3 Q4.5 1 4.5 3 V15 Q4.5 17 6 17 H8 M8 1 H6 Q4.5 1 4.5 3 M4.5 15 Q4.5 17 3 17 H1" fill="none" stroke="#222" stroke-width="1"/></svg>

<!-- input box -->
<div class="abs" style="left:996.5px;top:696.5px;width:501.5px;height:127.5px;background:#fff;border-radius:11px;box-shadow:0 0 0 1px #ececec"></div>
<div class="abs" style="left:1006px;top:706px;width:34px;height:27px;border:1px solid #e6e6e6;border-radius:5px;font-size:12px;color:#8a8a8a;text-align:center;line-height:24px">@</div>
<div class="abs" style="left:1046px;top:706px;width:173px;height:27.5px;border:1px solid #dedede;border-radius:5px"></div>
<div class="abs" style="left:1055px;top:711px;font-size:13.2px;color:#1e1e1e;white-space:nowrap">McGrath et al. - 2022 - A...</div>
<div class="abs" style="left:1016px;top:749px;font-size:13px;color:#9a9a9a;white-space:nowrap">Type in your message...</div>
<div class="abs" style="left:1006px;top:783px;width:109.5px;height:31.5px;border:1px solid #e4e4e4;border-radius:6px"></div>
<div class="abs" style="left:1122px;top:783px;width:100px;height:31.5px;border:1px solid #e4e4e4;border-radius:6px"></div>
<svg style="left:1018px;top:790px" width="16" height="17" viewBox="0 0 16 17">
 <path d="M1.5 4.8 L8 1 L14.5 4.8 Z" fill="#9a9a9a" stroke="#9a9a9a" stroke-width="0.8" stroke-linejoin="round"/>
 <g stroke="#9a9a9a" stroke-width="1"><line x1="3" y1="6.5" x2="3" y2="13.5"/><line x1="5.5" y1="6.5" x2="5.5" y2="13.5"/><line x1="8" y1="6.5" x2="8" y2="13.5"/><line x1="10.5" y1="6.5" x2="10.5" y2="13.5"/><line x1="13" y1="6.5" x2="13" y2="13.5"/></g>
 <line x1="1.5" y1="14.3" x2="14.5" y2="14.3" stroke="#9a9a9a" stroke-width="1"/>
 <line x1="0.5" y1="16" x2="15.5" y2="16" stroke="#9a9a9a" stroke-width="1"/>
</svg>
<div class="abs" style="left:1040px;top:791px;font-size:12px;color:#a0a0a0;white-space:nowrap;letter-spacing:-0.4px">Auto context</div>
<svg style="left:1133px;top:789px" width="18" height="19" viewBox="0 0 24 24">
  <g fill="none" stroke="#a0a0a0" stroke-width="1.3" stroke-linecap="round" stroke-linejoin="round">
  <path d="M11.5 3.5 C10 2 6.5 2.3 6 4.5 C3.5 4.8 2.5 7.2 3.5 9 C1.8 10.2 2 13.5 4 14.2 C3.4 16.8 5.2 19 7.5 18.8 C8 21.2 10.8 21.8 11.5 20 Z"/>
  <path d="M12.5 3.5 C14 2 17.5 2.3 18 4.5 C20.5 4.8 21.5 7.2 20.5 9 C22.2 10.2 22 13.5 20 14.2 C20.6 16.8 18.8 19 16.5 18.8 C16 21.2 13.2 21.8 12.5 20 Z"/>
  <path d="M7.5 8.5 C9 9 9 11 8 11.5 M16.5 8.5 C15 9 15 11 16 11.5 M8.5 15 C10 15 10.5 16.5 10 17 M15.5 15 C14 15 13.5 16.5 14 17"/>
  </g>
</svg>
<div class="abs" style="left:1156px;top:791px;font-size:12px;color:#a0a0a0;white-space:nowrap;letter-spacing:-0.6px">Deep think</div>
<div class="abs" style="left:1461px;top:785px;width:27px;height:27px;border-radius:50%;background:#bdbdbd"></div>
<svg style="left:1461px;top:785px" width="27" height="27"><path d="M13.5 20.5 V7 M7.8 12.5 L13.5 6.8 L19.2 12.5" fill="none" stroke="#fff" stroke-width="1.5"/></svg>
<!-- window corner -->
<svg style="left:1496px;top:822px" width="16" height="16"><path d="M16 4 A12 12 0 0 1 4 16 H16 Z" fill="#6a6a6a"/></svg>
<svg style="left:0;top:822px" width="16" height="16"><path d="M0 4 A12 12 0 0 0 12 16 H0 Z" fill="#c6c6c6"/></svg>
</body></html>
